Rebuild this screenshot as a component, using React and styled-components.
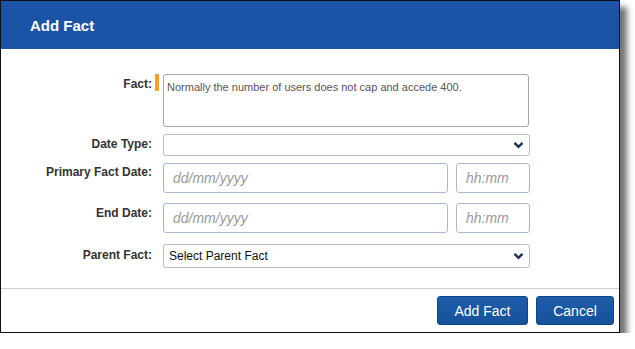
import React from 'react'
import styled, { createGlobalStyle } from 'styled-components'

const GlobalStyle = createGlobalStyle`
    body {
        margin: 0;
        background: #fff;
        font-family: "Liberation Sans", Arial, sans-serif;
    }
`;

const Dialog = styled.div`
    width: 618px;
    border: 1px solid #111;
    background: #fff;
    box-shadow: 7px 7px 6px rgba(0, 0, 0, 0.55);
`;

const Header = styled.div`
    height: 48px;
    background: #1b54a6;
    display: flex;
    align-items: center;
    padding-left: 29px;
    color: #fff;
    font-size: 15px;
    font-weight: 700;
`;

const Body = styled.div`
    display: grid;
    grid-template-columns: 151px 11px 367px;
    row-gap: 7px;
    padding: 25px 0 20px;
    border-bottom: 1px solid #cfcfcf;
`;

const Label = styled.div`
    text-align: right;
    font-size: 12px;
    font-weight: 700;
    color: #333;
    padding-top: ${({$top}) => $top || 0}px;
    margin-top: ${({$gap}) => $gap || 0}px;
`;

const Marker = styled.div`
    margin-top: ${({$gap}) => $gap || 0}px;
    display: flex;
    padding-left: 3px;
`;

const Required = styled.span`
    width: 4px;
    height: 17px;
    background: #f4a12a;
`;

const TextArea = styled.div`
    border: 1px solid #a8a8a8;
    border-radius: 3px;
    padding: 6px 3px;
    box-sizing: border-box;
    height: 53px;
    margin-right: 1px;
    font-size: 11px;
    color: #555;
`;

const Select = styled.div`
    height: ${({$h}) => $h}px;
    box-sizing: border-box;
    border: 1px solid #bcbcbc;
    border-radius: 3px;
    display: flex;
    align-items: center;
    justify-content: space-between;
    padding: 0 5px 0 5px;
    font-size: 12px;
    color: #111;
    margin-top: ${({$gap}) => $gap || 0}px;
`;

const DateRow = styled.div`
    display: flex;
    gap: 8px;
    margin-top: ${({$gap}) => $gap || 0}px;
`;

const Input = styled.div`
    width: ${({$w}) => $w}px;
    height: 30px;
    box-sizing: border-box;
    border: 1px solid #a9b9cf;
    border-radius: 3px;
    display: flex;
    align-items: center;
    padding-left: 9px;
    font-size: 14px;
    font-style: italic;
    color: #9a9a9a;
`;

const Footer = styled.div`
    display: flex;
    justify-content: flex-end;
    gap: 8px;
    padding: 7px 5px 7px 0;
`;

const Button = styled.button`
    height: 29px;
    padding: 0;
    width: ${({$w}) => $w}px;
    border: 1px solid #0f4688;
    border-radius: 3px;
    background: linear-gradient(#1d5ca8, #17529b);
    color: #fff;
    font-family: "Liberation Sans", Arial, sans-serif;
    font-size: 14px;
`;

const Chevron = () => (
    <svg width="11" height="8" viewBox="0 0 11 8">
        <path d="M1.5 1.8 L5.5 5.8 L9.5 1.8" fill="none" stroke="#1c2f4f" strokeWidth="2.4" />
    </svg>
)

const App = () => {
    return (
        <>
            <GlobalStyle />
            <Dialog>
                <Header>Add Fact</Header>
                <Body>
                    <Label $top={3}>Fact:</Label>
                    <Marker><Required /></Marker>
                    <TextArea>Normally the number of users does not cap and accede 400.</TextArea>

                    <Label $top={3}>Date Type:</Label>
                    <Marker />
                    <Select $h={22}><span></span><Chevron /></Select>

                    <Label $top={2}>Primary Fact Date:</Label>
                    <Marker />
                    <DateRow>
                        <Input $w={285}>dd/mm/yyyy</Input>
                        <Input $w={74}>hh:mm</Input>
                    </DateRow>

                    <Label $top={3} $gap={3}>End Date:</Label>
                    <Marker $gap={3} />
                    <DateRow $gap={3}>
                        <Input $w={285}>dd/mm/yyyy</Input>
                        <Input $w={74}>hh:mm</Input>
                    </DateRow>

                    <Label $top={4} $gap={4}>Parent Fact:</Label>
                    <Marker $gap={4} />
                    <Select $h={24} $gap={4}><span>Select Parent Fact</span><Chevron /></Select>
                </Body>
                <Footer>
                    <Button $w={91}>Add Fact</Button>
                    <Button $w={78}>Cancel</Button>
                </Footer>
            </Dialog>
        </>
    )
}

export default App
